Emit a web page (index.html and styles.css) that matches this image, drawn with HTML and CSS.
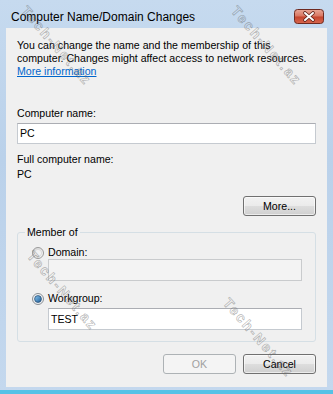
FILE: index.html
```html
<!DOCTYPE html>
<html lang="en">
<head>
    <meta charset="UTF-8">
    <meta name="viewport" content="width=device-width, initial-scale=1.0">
    <title>Computer Name/Domain Changes</title>
    <link rel="stylesheet" href="styles.css">
</head>
<body>

    <div class="window">
        <div class="titlebar">
            <span class="title">Computer Name/Domain Changes</span>
            <button class="close-button" aria-label="Close">
                <svg width="30" height="15" viewBox="0 0 30 15">
                    <defs>
                        <linearGradient id="closeGrad" x1="0" y1="0" x2="0" y2="1">
                            <stop offset="0" stop-color="#e9a898"/>
                            <stop offset="0.48" stop-color="#d87560"/>
                            <stop offset="0.52" stop-color="#c4442d"/>
                            <stop offset="1" stop-color="#d8684f"/>
                        </linearGradient>
                    </defs>
                    <rect x="0.5" y="0.5" width="29" height="14" rx="3" fill="url(#closeGrad)" stroke="#6e2a20"/>
                    <path d="M11 4 L19 11 M19 4 L11 11" stroke="#5b2018" stroke-width="3.6" stroke-linecap="round"/>
                    <path d="M11 4 L19 11 M19 4 L11 11" stroke="#ffffff" stroke-width="2" stroke-linecap="round"/>
                </svg>
            </button>
        </div>

        <div class="client">
            <p class="intro">You can change the name and the membership of this<br>computer. Changes might affect access to network resources.<br><a href="#">More information</a></p>

            <div class="label computer-label">Computer name:</div>
            <div class="textbox name-box">PC</div>

            <div class="label full-label">Full computer name:</div>
            <div class="label full-value">PC</div>

            <div class="more-row">
                <button class="win-button">More...</button>
            </div>

            <fieldset class="member-group">
                <legend>Member of</legend>
                <div class="radio-row first">
                    <svg class="radio" width="12" height="12" viewBox="0 0 12 12">
                        <defs>
                            <linearGradient id="radioOff" x1="0" y1="0" x2="1" y2="1">
                                <stop offset="0" stop-color="#d4d4d4"/>
                                <stop offset="1" stop-color="#fbfbfb"/>
                            </linearGradient>
                        </defs>
                        <circle cx="6" cy="6" r="5.5" fill="url(#radioOff)" stroke="#9a9a9a"/>
                        <circle cx="6" cy="6" r="3.6" fill="#f2f2f2" stroke="#d6d6d6" stroke-width="0.8"/>
                    </svg>
                    <span>Domain:</span>
                </div>
                <div class="textbox disabled"></div>

                <div class="radio-row second">
                    <svg class="radio" width="12" height="12" viewBox="0 0 12 12">
                        <defs>
                            <linearGradient id="radioOn" x1="0" y1="0" x2="1" y2="1">
                                <stop offset="0" stop-color="#8cc8f2"/>
                                <stop offset="1" stop-color="#1a5b96"/>
                            </linearGradient>
                        </defs>
                        <circle cx="6" cy="6" r="5.5" fill="#eef0f2" stroke="#8a8f94"/>
                        <circle cx="6" cy="6" r="3.4" fill="url(#radioOn)" stroke="#2b4f74" stroke-width="0.8"/>
                    </svg>
                    <span>Workgroup:</span>
                </div>
                <div class="textbox group-box">TEST</div>
            </fieldset>

            <div class="button-row">
                <button class="win-button" disabled>OK</button>
                <button class="win-button">Cancel</button>
            </div>
        </div>

        <div class="bottom-edge"></div>

        <!-- marca d'agua -->
        <span class="watermark wm-1">Tech-Net.az</span>
        <span class="watermark wm-2">Tech-Net.az</span>
        <span class="watermark wm-3">Tech-Net.az</span>
        <span class="watermark wm-4">Tech-Net.az</span>
    </div>

</body>
</html>
```

FILE: styles.css
```css
/* Janela estilo Windows 7 */

:root {
    --frame: #bcd3ec;
    --client: #f0f0f0;
    --text: #000000;
    --link: #0066cc;
}

body {
    margin: 0;
    font-family: 'Liberation Sans', Arial, sans-serif;
    color: var(--text);
}

.window {
    position: relative;
    width: 333px; height: 394px; overflow: hidden;
    background: linear-gradient(180deg, #c6daef 0%, #bad1ea 40%, #c4d8ee 100%);
    display: flex; flex-direction: column;
}

/* --- BARRA DE TITULO --- */
.titlebar {
    height: 28px; display: flex; align-items: flex-start;
    padding: 0 9px 0 11px; box-sizing: border-box;
}
.title {
    font-size: 12px; line-height: 14px; padding-top: 10px;
}
.close-button {
    margin-left: auto; margin-top: 9px;
    width: 30px; height: 15px; padding: 0; border: none;
    background: none; display: block;
}
.close-button svg { display: block; }

/* --- AREA CLIENTE --- */
.client {
    margin: 0 6px; height: 359px; box-sizing: border-box;
    background: var(--client);
    padding: 0 11px;
    font-size: 10.6px; line-height: 13px;
}
.intro { margin: 11px 0 0 0; }
.intro a { color: var(--link); }

.label { line-height: 13px; }
.computer-label { margin-top: 29px; }
.full-label { margin-top: 9px; }
.full-value { margin-top: 2px; }

.textbox {
    box-sizing: border-box; height: 22px;
    border: 1px solid #c5cad0; border-top-color: #abadb3;
    background: #ffffff; padding: 0 2px;
    line-height: 20px; font-size: 10.6px;
}
.name-box { margin-top: 3px; height: 21px; line-height: 19px; }
.textbox.disabled { background: #f3f3f3; border-color: #c9cbcd; }

.more-row { margin-top: 15px; display: flex; justify-content: flex-end; }

.win-button {
    width: 73px; height: 20px; box-sizing: border-box;
    font-family: 'Liberation Sans', Arial, sans-serif; font-size: 10.6px; color: #000;
    border: 1px solid #707070; border-radius: 3px; padding: 0;
    background: linear-gradient(180deg, #f2f2f2 0%, #ebebeb 48%, #dddddd 52%, #cfcfcf 100%);
    box-shadow: inset 0 0 0 1px rgba(255, 255, 255, 0.6);
}
.win-button:disabled {
    color: #a0a0a0; border-color: #adb2b5;
    background: #f4f4f4; box-shadow: none;
}

/* --- GRUPO MEMBER OF --- */
.member-group {
    margin: 10px 0 0 0; padding: 0 13px 11px 14px;
    border: 1px solid #d5dfe5; border-radius: 3px;
}
.member-group legend {
    margin-left: -7px; padding: 0 2px; line-height: 13px;
}
.radio-row {
    display: flex; align-items: center; gap: 4px;
    height: 13px;
}
.radio-row.first { margin-top: 7px; }
.radio-row.second { margin-top: 11px; }
.radio { display: block; flex-shrink: 0; }
.member-group .textbox { margin-left: 16px; }
.group-box { margin-top: 3px; }

.button-row {
    margin-top: 12px; display: flex; justify-content: flex-end; gap: 7px;
}

.bottom-edge {
    height: 7px; box-sizing: border-box;
    border-bottom: 4px solid #56c2e6;
}

/* marca d'agua */
.watermark {
    position: absolute; pointer-events: none;
    font-size: 14px; letter-spacing: 2px; font-weight: bold;
    color: transparent; -webkit-text-stroke: 0.6px rgba(100, 100, 100, 0.5);
    transform-origin: 0 50%; transform: rotate(49deg);
    white-space: nowrap;
}
.wm-1 { left: 24px; top: 0; }
.wm-2 { left: 234px; top: 0; }
.wm-3 { left: 30px; top: 245px; }
.wm-4 { left: 226px; top: 292px; }
```
